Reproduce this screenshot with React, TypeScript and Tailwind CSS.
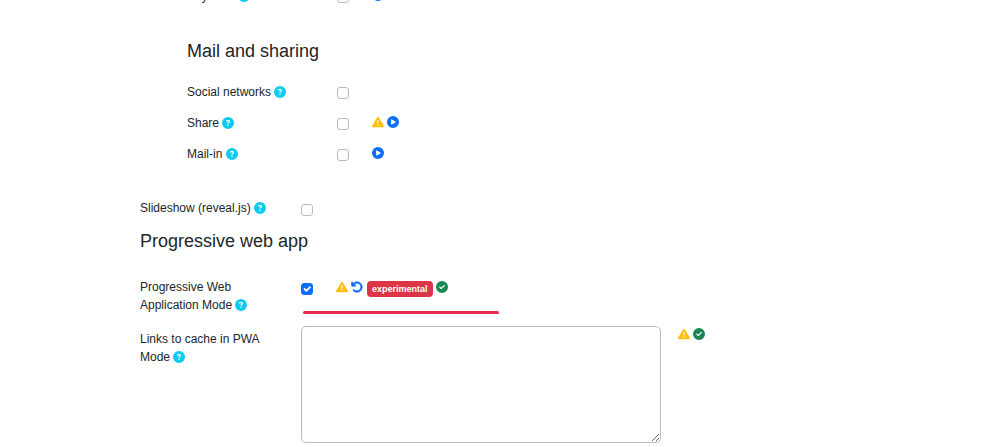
import React from 'react';
import {
  FaArrowRotateLeft,
  FaCircleCheck,
  FaCirclePlay,
  FaCircleQuestion,
  FaTriangleExclamation
} from 'react-icons/fa6';

const HelpLink: React.FC<{ topic: string }> = ({ topic }) => (
  <a href="#help" aria-label={`Help: ${topic}`} className="inline-block align-[-2px] text-[#0dcaf0]">
    <FaCircleQuestion className="size-3" />
  </a>
);

const Warning = () => <FaTriangleExclamation className="size-3 text-[#ffc107]" />;

const Preview: React.FC<{ topic: string }> = ({ topic }) => (
  <a href="#preview" aria-label={`Preview ${topic}`} className="text-[#0d6efd]">
    <FaCirclePlay className="size-3" />
  </a>
);

const Saved = () => <FaCircleCheck className="size-3 text-[#198754]" />;

interface CheckProps {
  id: string;
  checked?: boolean;
}

const Check: React.FC<CheckProps> = ({ id, checked }) => (
  <span className="relative mt-[5px] block size-3">
    <input
      id={id}
      type="checkbox"
      defaultChecked={checked}
      className="peer block size-3 appearance-none rounded-[3px] border border-[#b6bcc3] bg-white checked:border-[#0d6efd] checked:bg-[#0d6efd]"
    />
    <svg
      viewBox="0 0 20 20"
      className="pointer-events-none absolute inset-0 hidden size-3 peer-checked:block"
      fill="none"
      stroke="#fff"
      strokeLinecap="round"
      strokeLinejoin="round"
      strokeWidth="3"
    >
      <path d="m6 10 3 3 6-6" />
    </svg>
  </span>
);

interface FeatureProps {
  id: string;
  label: string;
  children?: React.ReactNode;
}

const Feature: React.FC<FeatureProps> = ({ id, label, children }) => (
  <div className="flex h-[31px] items-start pt-[6px]">
    <div className="w-[150px] pt-px">
      <label htmlFor={id}>{label}</label> <HelpLink topic={label} />
    </div>
    <Check id={id} />
    <div className="ml-[23px] flex gap-[3px] pt-[3px]">{children}</div>
  </div>
);

export default function App() {
  return (
    <main className="overflow-hidden bg-white font-['Liberation_Sans',Arial,sans-serif] text-[12px] leading-[18px] text-[#212529]">
      <form className="-mt-5 pb-1 pl-[140px]">
        <section className="pl-[47px]">
          <Feature id="payment" label="Payment">
            <Preview topic="Payment" />
          </Feature>
          <h2 className="mt-[29px] mb-[14px] text-[18px] leading-[22px]">Mail and sharing</h2>
          <Feature id="social" label="Social networks" />
          <Feature id="share" label="Share">
            <Warning />
            <Preview topic="Share" />
          </Feature>
          <Feature id="mail-in" label="Mail-in">
            <Preview topic="Mail-in" />
          </Feature>
        </section>

        <div className="mt-6 flex h-[31px] items-start pt-[6px]">
          <div className="w-[161px]">
            <label htmlFor="slideshow">Slideshow (reveal.js)</label> <HelpLink topic="Slideshow" />
          </div>
          <Check id="slideshow" />
        </div>

        <h2 className="mt-[6px] mb-5 text-[18px] leading-[22px]">Progressive web app</h2>

        <div className="flex items-start pt-[6px]">
          <div className="w-[161px] pr-5">
            <label htmlFor="pwa">Progressive Web Application Mode</label> <HelpLink topic="Progressive Web Application Mode" />
          </div>
          <div>
            <div className="flex items-start">
              <Check id="pwa" checked />
              <div className="ml-[23px] flex items-start gap-[3px] pt-[3px]">
                <Warning />
                <button type="button" aria-label="Reset to default" className="text-[#0d6efd]">
                  <FaArrowRotateLeft className="size-3 stroke-current stroke-[24]" />
                </button>
                <span className="ml-px rounded-[4px] bg-[#dc3545] px-[5px] py-[3px] text-[9px] leading-[10px] font-bold text-white">
                  experimental
                </span>
                <Saved />
              </div>
            </div>
            <div className="mt-[14px] ml-[2px] h-[3px] w-[196px] rounded-full bg-[#e62b50]" />
          </div>
        </div>

        <div className="mt-2 flex items-start pt-1">
          <div className="w-[161px] pt-1 pr-5">
            <label htmlFor="pwa-links">Links to cache in PWA Mode</label> <HelpLink topic="Links to cache" />
          </div>
          <textarea
            id="pwa-links"
            className="block h-[117px] w-[360px] rounded-[5px] border border-[#b6bcc3] bg-white px-2 py-1"
          />
          <div className="ml-[17px] flex gap-[3px] pt-[2px]">
            <Warning />
            <Saved />
          </div>
        </div>
      </form>
    </main>
  );
}
